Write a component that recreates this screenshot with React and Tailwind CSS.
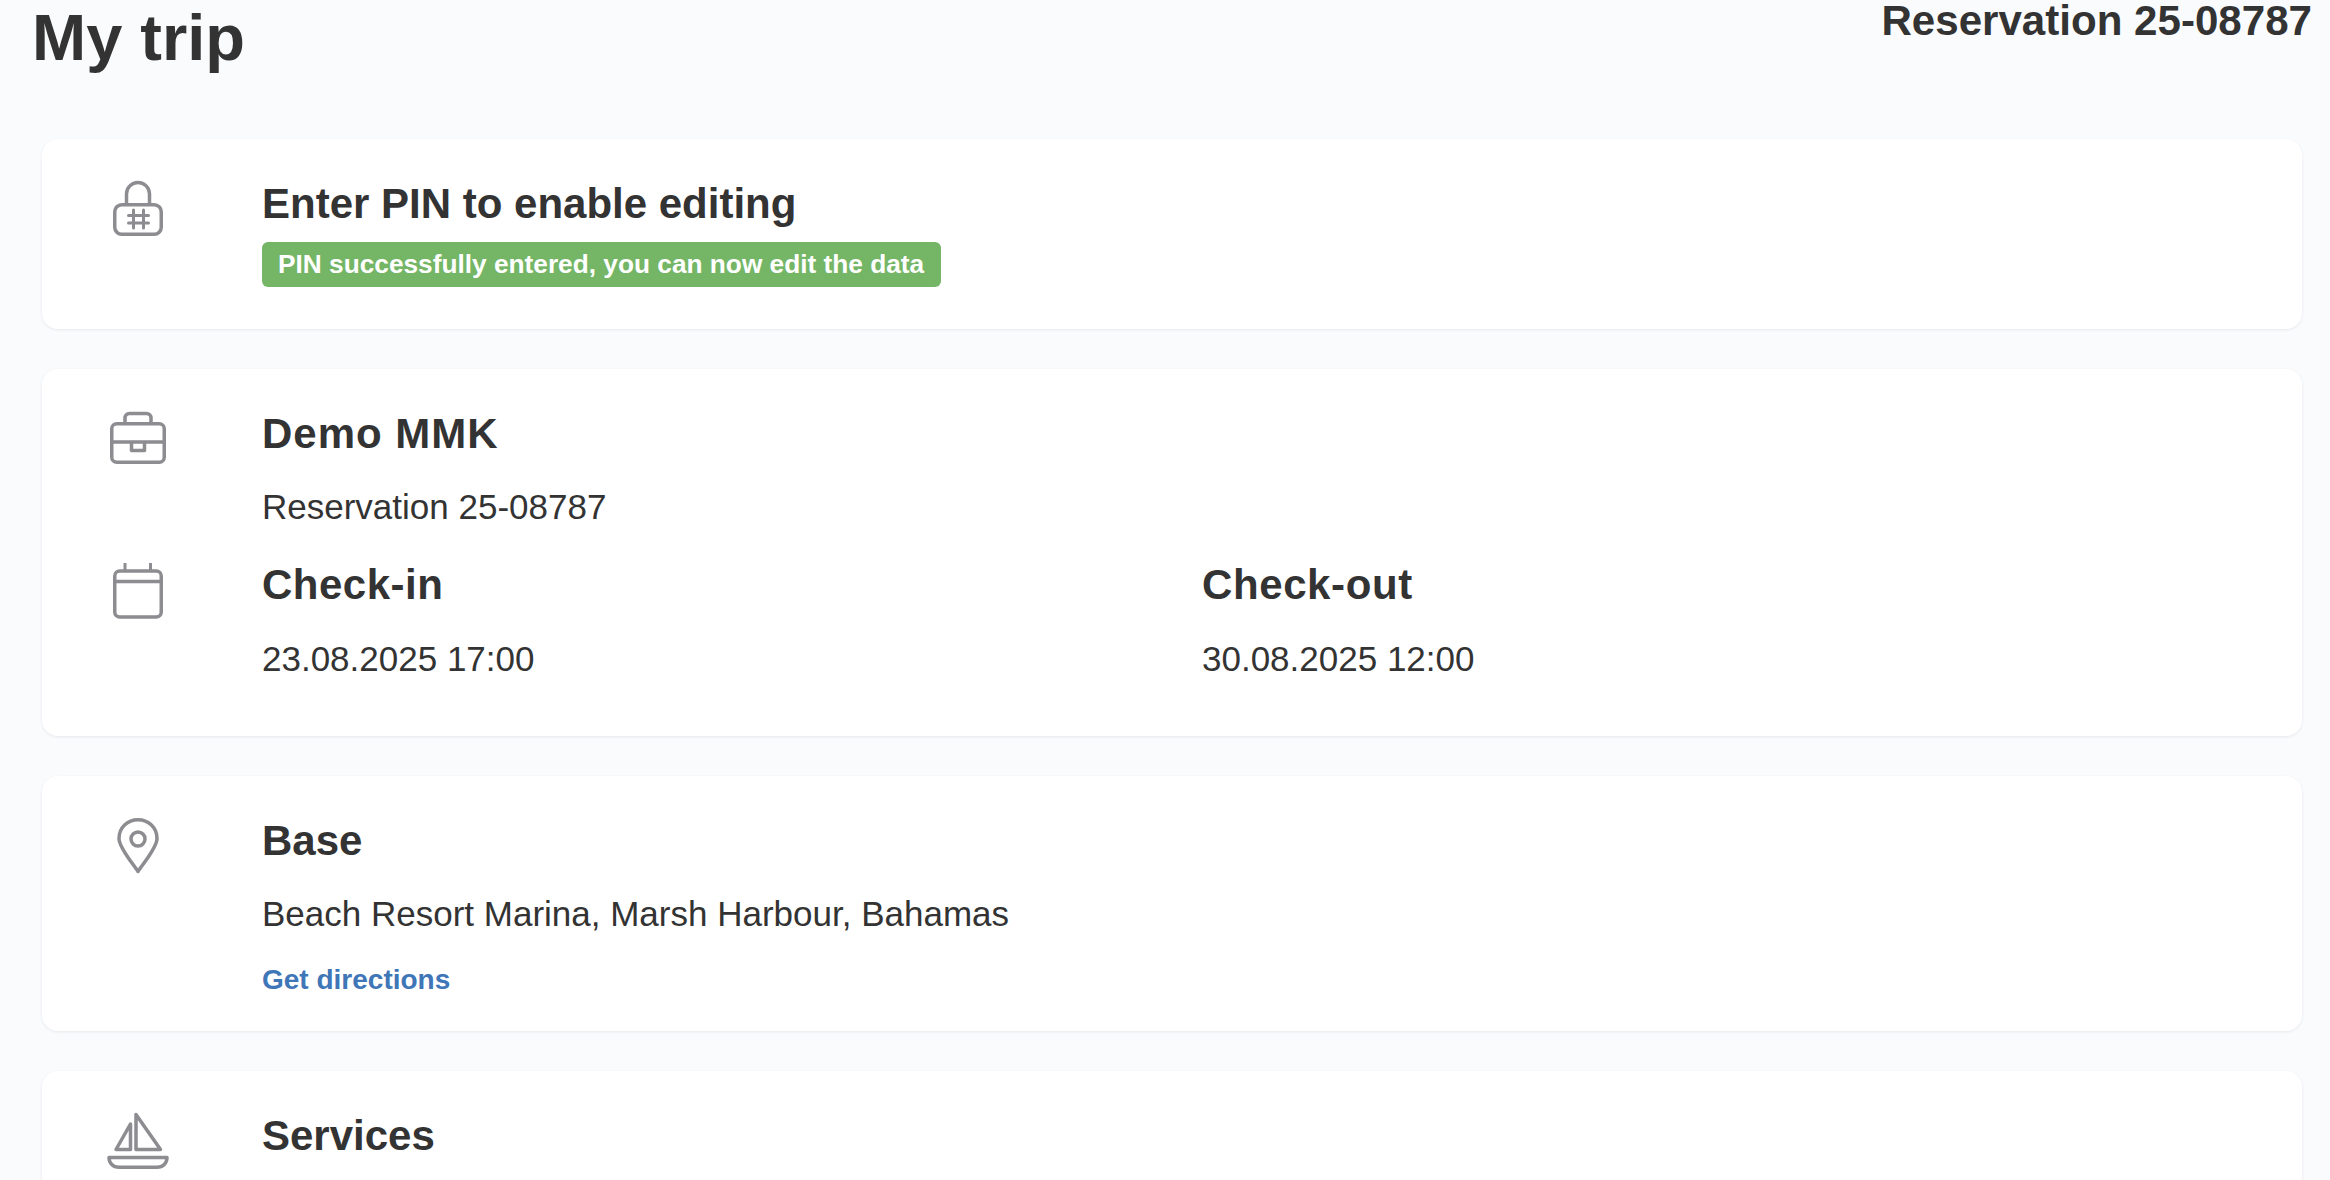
const Ic = ({ children }) => (
  <svg width="60" height="60" viewBox="0 0 60 60" fill="none" stroke="#8c8c91" strokeWidth="3.5" strokeLinecap="round" strokeLinejoin="round" className="shrink-0 overflow-visible">
    {children}
  </svg>
);

const LockIcon = () => (
  <Ic>
    <rect x="6.75" y="25.75" width="46.5" height="29.5" rx="7" />
    <path d="M18.5 25V15a11.5 11.5 0 0 1 23 0V25" />
    <path d="M25.5 31V49M35.5 31V49M20.5 36.5H40.5M20.5 44H40.5" strokeWidth="3" />
  </Ic>
);
const CaseIcon = () => (
  <Ic>
    <rect x="3.75" y="14.75" width="52.5" height="38.5" rx="5" />
    <path d="M17 14V9a4.5 4.5 0 0 1 4.5-4.5H38.5A4.5 4.5 0 0 1 43 9V14" />
    <path d="M4 33H23.5M36.5 33H56M23.5 33V41.5H36.5V33Z" />
  </Ic>
);
const CalIcon = () => (
  <Ic>
    <rect x="6.75" y="11" width="46.5" height="46" rx="5" />
    <path d="M7 21.5H53" />
    <path d="M17 3V10M42.5 3V10" strokeLinecap="butt" strokeWidth="3" />
  </Ic>
);
const PinIcon = () => (
  <Ic>
    <path d="M30 55.5C26 49 11 32 11 22.5C11 11.5 19.5 3.75 30 3.75S49 11.5 49 22.5C49 32 34 49 30 55.5Z" />
    <circle cx="30" cy="23" r="7" />
  </Ic>
);
const BoatIcon = () => (
  <Ic>
    <path d="M28 3.5V38.5H52.5Z" />
    <path d="M22.5 13V38.5H8Z" />
    <path d="M1 46.5H59C59 52 55 56.25 49 56.25H11C5 56.25 1 52 1 46.5Z" />
  </Ic>
);

const Card = ({ className, children }) => (
  <section className={`bg-white rounded-[16px] shadow-[0_1px_3px_rgba(30,40,70,0.09)] pt-[40px] pl-[66px] pr-[40px] shrink-0 ${className}`}>
    {children}
  </section>
);

const Row = ({ icon, children, className = "" }) => (
  <div className={`flex gap-[94px] ${className}`}>
    {icon}
    <div className="flex-1 min-w-0">{children}</div>
  </div>
);

const H = ({ children, className = "" }) => <h2 className={`text-[42px] leading-[48px] pt-px font-bold text-[#333333] ${className}`}>{children}</h2>;
const P = ({ children, className = "" }) => <p className={`text-[35px] leading-[48px] text-[#333333] ${className}`}>{children}</p>;

export default function App() {
  return (
    <div className="h-[1180px] w-[2330px] overflow-hidden bg-[#fafbfd] font-['Liberation_Sans',Arial,sans-serif]">
      <header className="flex justify-between h-[139px] pl-[32px] pr-[18px]">
        <h1 className="text-[65px] leading-[76px] font-bold text-[#333333]">My trip</h1>
        <div className="text-[42.1px] leading-[42px] font-bold text-[#333333]">Reservation 25-08787</div>
      </header>
      <main className="flex flex-col gap-[40px] ml-[42px] w-[2260px]">
        <Card className="h-[190px]">
          <Row icon={<LockIcon />}>
            <H>Enter PIN to enable editing</H>
            <div className="inline-block w-[679px] mt-[14px] bg-[#74b666] rounded-[6px] px-[16px] h-[45px] leading-[45px] text-[26.25px] font-bold text-white whitespace-nowrap">
              PIN successfully entered, you can now edit the data
            </div>
          </Row>
        </Card>
        <Card className="h-[367px]">
          <Row icon={<CaseIcon />}>
            <H className="tracking-[1px]">Demo MMK</H>
            <P className="mt-[25px]">Reservation 25-08787</P>
          </Row>
          <Row icon={<CalIcon />} className="mt-[29px]">
            <div className="flex">
              <div className="w-[940px]">
                <H className="tracking-[0.5px]">Check-in</H>
                <P className="mt-[26px]">23.08.2025 17:00</P>
              </div>
              <div>
                <H className="tracking-[0.6px]">Check-out</H>
                <P className="mt-[26px]">30.08.2025 12:00</P>
              </div>
            </div>
          </Row>
        </Card>
        <Card className="h-[255px]">
          <Row icon={<PinIcon />}>
            <H>Base</H>
            <P className="mt-[25px]">Beach Resort Marina, Marsh Harbour, Bahamas</P>
            <a className="block mt-[22px] text-[28px] leading-[40px] font-bold text-[#3f76b8]">Get directions</a>
          </Row>
        </Card>
        <Card className="h-[200px]">
          <Row icon={<BoatIcon />}>
            <H>Services</H>
          </Row>
        </Card>
      </main>
    </div>
  );
}
